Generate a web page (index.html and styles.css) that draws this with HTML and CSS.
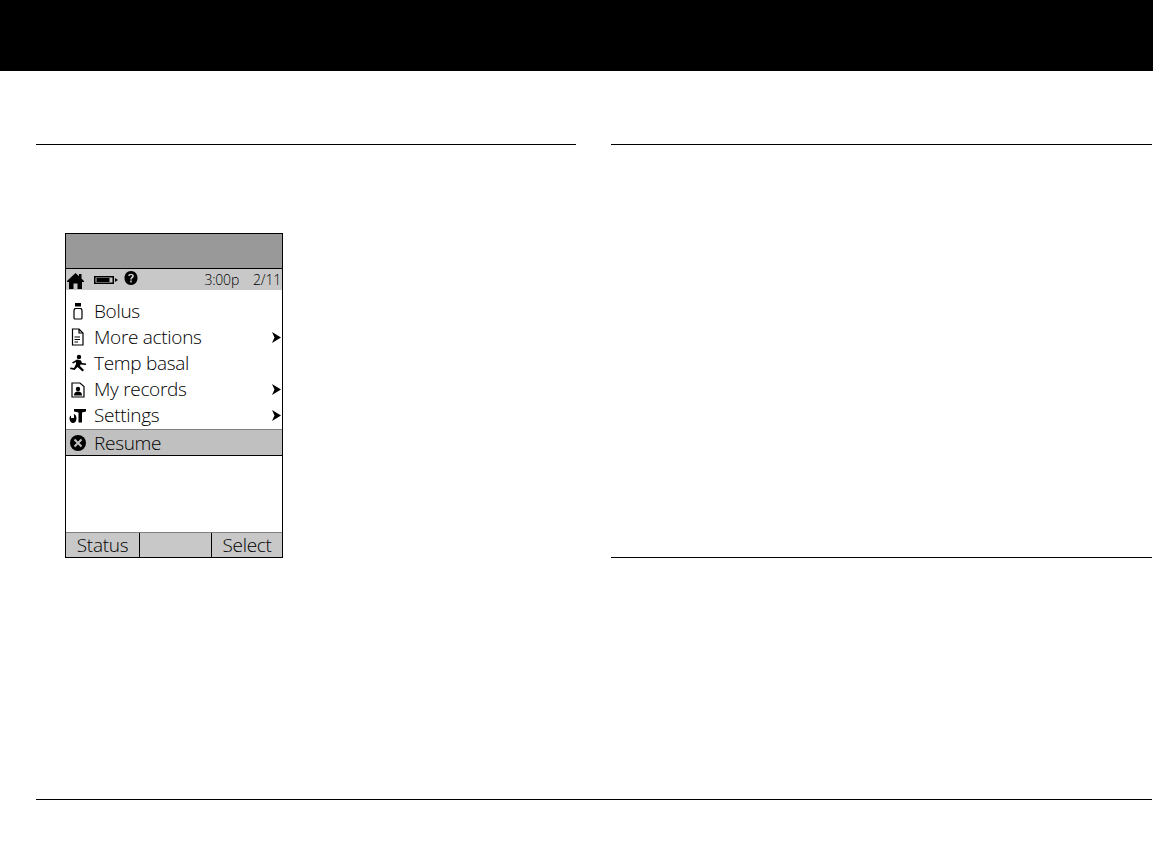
FILE: index.html
```html
<!DOCTYPE html>
<html lang="en">
<head>
    <meta charset="UTF-8">
    <title>Pump menu</title>
    <link rel="stylesheet" href="styles.css">
</head>
<body>

<div class="top-band"></div>

<div class="columns">
    <div class="col-left">
        <div class="pump-screen">
            <div class="screen-title"></div>
            <div class="status-bar">
                <svg class="ico-home" viewBox="0 0 17 16"><path d="M8.5 0 L12 3.2 V1 H14.5 V5.5 L17 8 V9 H15 V16 H10.5 V10.5 H6.5 V16 H2 V9 H0 V8 Z"/></svg>
                <svg class="ico-batt" viewBox="0 0 24 10"><path d="M0 1 H20 V9 H0 Z M1.5 2.5 V7.5 H18.5 V2.5 Z" fill-rule="evenodd"/><rect x="2.5" y="3" width="13" height="4"/><path d="M21 3 L24 5 L21 7 Z"/></svg>
                <svg class="ico-help" viewBox="0 0 14 14"><path fill-rule="evenodd" d="M7 0 C11 0 13.5 3 13.5 7 C13.5 11 11 14 7 14 C3 14 .5 11 .5 7 C.5 3 3 0 7 0 Z M4.2 5 H6 C6 3.8 8 3.8 8 5 C8 6 6.2 6.2 6.2 8.6 H7.8 C7.8 7 9.9 6.8 9.9 4.9 C9.9 2.2 4.2 2 4.2 5 Z M6.2 9.5 V11.4 H7.8 V9.5 Z"/></svg>
                <span class="status-time">3:00p</span>
                <span class="status-date">2/11</span>
            </div>
            <ul class="menu">
                <li class="menu-item">
                    <svg class="menu-ico" viewBox="0 0 18 18"><path fill="none" stroke="#000" stroke-width="1.2" d="M6 6.5 Q5 7.5 5 9 V16 Q5 17 6 17 H12 Q13 17 13 16 V9 Q13 7.5 12 6.5 Z"/><rect x="6" y="1" width="6" height="3.5"/></svg>
                    <span>Bolus</span>
                </li>
                <li class="menu-item">
                    <svg class="menu-ico" viewBox="0 0 18 18"><path fill="none" stroke="#000" stroke-width="1.2" d="M3.5 1 H10 L14 5 V17 H3.5 Z M10 1 V5 H14"/><path stroke="#000" stroke-width="1.2" d="M5.5 9 H11 M5.5 11.5 H11 M5.5 14 H9"/></svg>
                    <span>More actions</span>
                    <svg class="menu-arrow" viewBox="0 0 9 11"><path d="M0 0 L9 5.5 L0 11 L2.5 5.5 Z"/></svg>
                </li>
                <li class="menu-item">
                    <svg class="menu-ico" viewBox="0 0 18 18"><circle cx="10" cy="3" r="2.2"/><path d="M8 5.5 L12 6.5 L13 9 L17 9.5 L17 11 L11.5 10.5 L11 12 L15 16 L13.5 17.5 L8.5 13 L5.5 16 L1 15 L1.5 13.5 L5 14 L7 10 L7 8 L4 9.5 L3 8.5 Z"/></svg>
                    <span>Temp basal</span>
                </li>
                <li class="menu-item">
                    <svg class="menu-ico" viewBox="0 0 18 18"><path fill="none" stroke="#000" stroke-width="1.2" d="M3 3 H11 L15 6.5 V17 H3 Z"/><circle cx="9" cy="9" r="2.2"/><path d="M5 15.5 Q5 11.5 9 11.5 Q13 11.5 13 15.5 Z"/></svg>
                    <span>My records</span>
                    <svg class="menu-arrow" viewBox="0 0 9 11"><path d="M0 0 L9 5.5 L0 11 L2.5 5.5 Z"/></svg>
                </li>
                <li class="menu-item">
                    <svg class="menu-ico" viewBox="0 0 18 18"><path d="M5 3 H17 V5.5 L13 6.5 V16.5 H9.5 V6.5 L5 5.5 Z"/><path fill-rule="evenodd" d="M4 8 C6.5 8 7.5 10 7.5 12.5 C7.5 15 6 17 4 17 C2 17 .5 15 .5 12.5 C.5 11 1 10 2 9.5 V12 H5 V8.5 Z"/></svg>
                    <span>Settings</span>
                    <svg class="menu-arrow" viewBox="0 0 9 11"><path d="M0 0 L9 5.5 L0 11 L2.5 5.5 Z"/></svg>
                </li>
                <li class="menu-item selected">
                    <svg class="menu-ico" viewBox="0 0 18 18"><circle cx="9" cy="9" r="8"/><path stroke="#c0c0c0" stroke-width="2" d="M5.5 5.5 L12.5 12.5 M12.5 5.5 L5.5 12.5"/></svg>
                    <span>Resume</span>
                </li>
            </ul>
            <div class="softkeys">
                <span class="softkey">Status</span>
                <span class="softkey"></span>
                <span class="softkey">Select</span>
            </div>
        </div>
    </div>
    <div class="col-right"></div>
</div>

<div class="bottom-rule"></div>

</body>
</html>
```
FILE: styles.css
```css
body {
    margin: 0;
    padding: 0;
    height: 846px;
    overflow: hidden;
    background-color: #ffffff;
    font-family: "Open Sans", sans-serif;
    color: #000000;
}
.top-band {
    height: 71px;
    background-color: #000000;
}
.columns {
    display: flex;
    gap: 35px;
    margin: 73px 1px 0 36px;
    height: 655px;
}
.col-left {
    flex: 0 0 540px;
    border-top: 1px solid #000000;
    padding: 88px 0 0 29px;
    box-sizing: border-box;
}
.col-right {
    flex: 1;
    height: 414px;
    box-sizing: border-box;
    border-top: 1px solid #000000;
    border-bottom: 1px solid #000000;
}
.bottom-rule {
    margin: 0 1px 0 36px;
    border-top: 1px solid #000000;
}

/* pump screen */
.pump-screen {
    width: 218px;
    height: 325px;
    box-sizing: border-box;
    border: 1px solid #000000;
    display: flex;
    flex-direction: column;
}
.screen-title {
    height: 34px;
    background-color: #999999;
    border-bottom: 1px solid #000000;
}
.status-bar {
    height: 21px;
    flex: none;
    background-color: #c8c8c8;
    display: flex;
    align-items: center;
    font-size: 14px;
    font-weight: 300;
    letter-spacing: -0.2px;
    padding: 0 1px;
}
.ico-home {
    width: 17px;
    height: 16px;
    margin-top: 3px;
}
.ico-batt {
    width: 24px;
    height: 10px;
    margin-left: 10px;
}
.ico-help {
    width: 14px;
    height: 14px;
    margin: -3px 0 0 6px;
}
.status-time {
    margin-left: auto;
}
.status-date {
    margin-left: 14px;
}
.menu {
    list-style: none;
    margin: 8px 0 0 0;
    padding: 0;
    flex: 1;
}
.menu-item {
    height: 26px;
    display: flex;
    align-items: center;
    font-size: 19px;
    font-weight: 300;
    letter-spacing: -0.3px;
    padding-left: 3px;
    padding-right: 1px;
    box-sizing: border-box;
}
.menu-item.selected {
    background-color: #c0c0c0;
    border-top: 1px solid #808080;
    border-bottom: 1px solid #000000;
    height: 27px;
    margin-top: 1px;
}
.menu-ico {
    width: 18px;
    height: 18px;
    margin-right: 7px;
    flex: none;
}
.menu-arrow {
    width: 9px;
    height: 11px;
    margin-left: auto;
}
.softkeys {
    height: 24px;
    flex: none;
    background-color: #c8c8c8;
    border-top: 1px solid #808080;
    display: grid;
    grid-template-columns: 73px 72px 1fr;
    font-size: 19px;
    font-weight: 300;
    letter-spacing: -0.3px;
    line-height: 24px;
    text-align: center;
}
.softkey + .softkey {
    border-left: 1px solid #000000;
}
```
